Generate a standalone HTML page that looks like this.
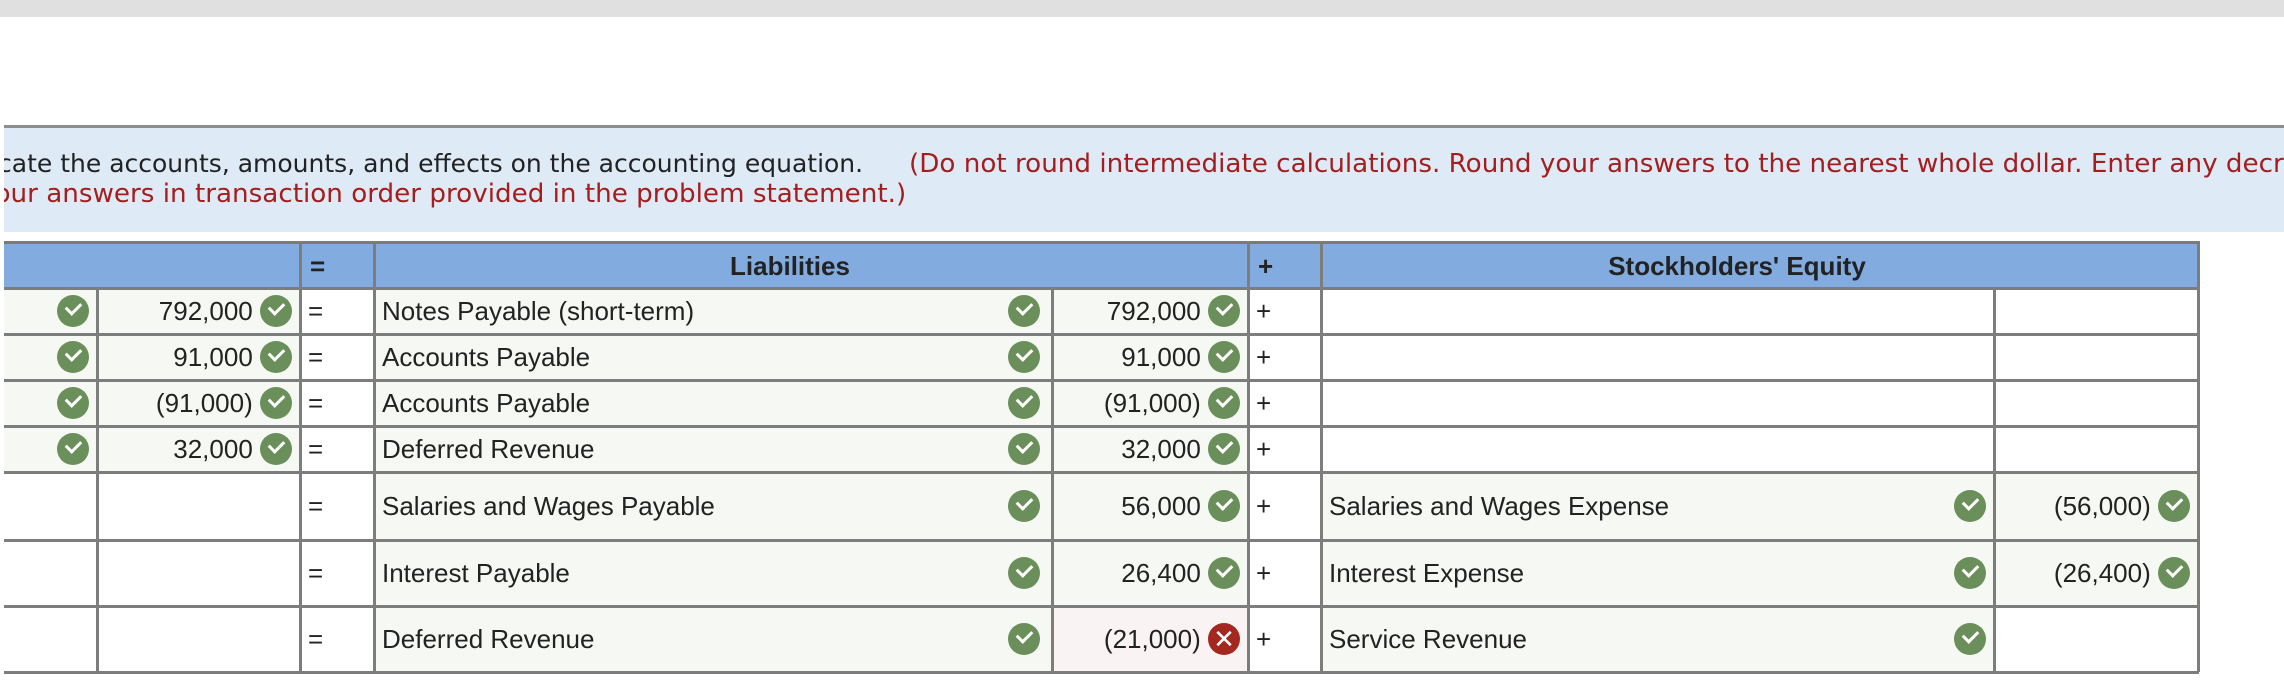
<!DOCTYPE html>
<html><head><meta charset="utf-8"><style>
body{margin:0;width:2284px;height:688px;position:relative;overflow:hidden;background:#fff;font-family:"Liberation Sans",Arial,sans-serif;color:#222}
.a{position:absolute}
.ins{position:absolute;font-family:"DejaVu Sans",Verdana,sans-serif;font-size:25px;white-space:nowrap;color:#222}
.r{color:#a51d1d;font-size:26.2px}
.c{position:absolute;box-sizing:border-box;font-size:26px;display:flex;align-items:center}
.ck{display:inline-block;width:32px;height:32px;border-radius:50%;background:#6a8f5a;position:relative;flex:none}
.ck:after{content:"";position:absolute;left:9px;top:7px;width:12px;height:7px;border-left:3px solid #fff;border-bottom:3px solid #fff;transform:rotate(-45deg)}
.x{display:inline-block;width:32px;height:32px;border-radius:50%;background:#a4281f;position:relative;flex:none;color:#fff;font-size:26px;text-align:center;line-height:32px}
</style></head><body>
<div class="a" style="left:0;top:0;width:2284px;height:17px;background:#e0e0e0"></div>
<div class="a" style="left:4px;top:125px;width:2280px;height:104px;background:#deebf7;border-top:3px solid #8e8e8e;overflow:hidden">
<div class="ins" style="left:-52px;top:21px">Indicate the accounts, amounts, and effects on the accounting equation. <span class="r" style="margin-left:38px">(Do not round intermediate calculations. Round your answers to the nearest whole dollar. Enter any decrease as a negative amount.</span></div>
<div class="ins r" style="left:-25px;top:51px">your answers in transaction order provided in the problem statement.)</div>
</div>
<div id="t"></div>
<script>
var X=[4,97,300,374,1052,1248,1321,1994,2198];
var Y=[288,334,380,426,472,540,606,672];
var h='';
h+='<div class="a" style="left:4px;top:241px;width:2194px;height:47px;background:#82abdf;border-top:3px solid #7a7a7a"></div>';
function vl(x,y1,y2){h+='<div class="a" style="left:'+(x-1)+'px;top:'+y1+'px;width:3px;height:'+(y2-y1)+'px;background:#7d7d7d"></div>';}
function hl(y,x1,x2){h+='<div class="a" style="left:'+x1+'px;top:'+(y-1)+'px;width:'+(x2-x1)+'px;height:3px;background:#7d7d7d"></div>';}
h+='<div class="c" style="left:310px;top:244px;height:44px;font-weight:bold">=</div>';
h+='<div class="c" style="left:374px;top:244px;width:832px;height:44px;justify-content:center;font-weight:bold">Liabilities</div>';
h+='<div class="c" style="left:1258px;top:244px;height:44px;font-weight:bold">+</div>';
h+='<div class="c" style="left:1321px;top:244px;width:832px;height:44px;justify-content:center;font-weight:bold">Stockholders\' Equity</div>';
var rows=[
[1,'792,000','Notes Payable (short-term)','792,000',0,'',''],
[1,'91,000','Accounts Payable','91,000',0,'',''],
[1,'(91,000)','Accounts Payable','(91,000)',0,'',''],
[1,'32,000','Deferred Revenue','32,000',0,'',''],
[0,'','Salaries and Wages Payable','56,000',0,'Salaries and Wages Expense','(56,000)'],
[0,'','Interest Payable','26,400',0,'Interest Expense','(26,400)'],
[0,'','Deferred Revenue','(21,000)',1,'Service Revenue','']];
var L='#f6f8f3';
for(var i=0;i<7;i++){var r=rows[i],y=Y[i],hh=Y[i+1]-y;
 function cell(x1,x2,bg,inner,just){h+='<div class="c" style="left:'+x1+'px;top:'+y+'px;width:'+(x2-x1)+'px;height:'+hh+'px;background:'+bg+';justify-content:'+(just||'flex-start')+';padding:0 8px">'+inner+'</div>';}
 cell(X[0],X[1],r[0]?L:'#fff',r[0]?'<span class="ck"></span>':'','flex-end');
 cell(X[1],X[2],r[0]?L:'#fff',r[0]?r[1]+'&nbsp;<span class="ck"></span>':'','flex-end');
 cell(X[2],X[3],'#fff','=');
 cell(X[3],X[4],L,'<span style="flex:1">'+r[2]+'</span><span class="ck" style="margin-right:4px"></span>');
 cell(X[4],X[5],r[4]?'#faf3f3':L,r[3]+'&nbsp;'+(r[4]?'<span class="x">✕</span>':'<span class="ck"></span>'),'flex-end');
 cell(X[5],X[6],'#fff','+');
 cell(X[6],X[7],r[5]?L:'#fff',r[5]?'<span style="flex:1">'+r[5]+'</span><span class="ck"></span>':'');
 cell(X[7],X[8],r[6]?L:'#fff',r[6]?r[6]+'&nbsp;<span class="ck"></span>':'','flex-end');
}
for(var i=0;i<8;i++)hl(Y[i],4,2199);
for(var j=1;j<9;j++){if(j==1||j==4||j==7)vl(X[j],288,672);else vl(X[j],241,672);}
document.getElementById('t').innerHTML=h;
</script>
</body></html>
